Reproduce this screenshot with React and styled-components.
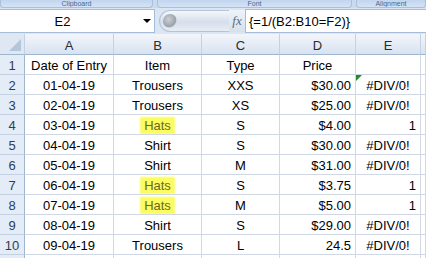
import React from 'react'
import styled, { createGlobalStyle } from 'styled-components'

const Global = createGlobalStyle`
html,body{margin:0;padding:0;background:#fff;}
body{font-family:"Liberation Sans",Arial,sans-serif;overflow:hidden;}
`

const Page = styled.div`
width:426px;
height:258px;
overflow:hidden;
background:#dbe6f4;
display:flex;
flex-direction:column;
`

const Ribbon = styled.div`
flex:0 0 8px;
display:flex;
gap:4px;
background:#c9d9ee;
overflow:hidden;
`

const Group = styled.div`
flex:0 0 ${({w})=>w}px;
height:8px;
background:linear-gradient(#c2d5ef,#d5e3f5);
border:1px solid #a9c0dc;
border-top:none;
border-radius:0 0 4px 4px;
box-sizing:border-box;
display:flex;
justify-content:center;
align-items:center;
font-size:7px;
line-height:7px;
color:#4a6790;
overflow:hidden;
`

const FormulaBar = styled.div`
flex:0 0 24px;
margin-top:1px;
display:flex;
align-items:stretch;
background:#dbe6f4;
`

const NameBox = styled.div`
flex:0 0 155px;
background:#fff;
border:1px solid #a7bcd8;
border-left:none;
box-sizing:border-box;
display:flex;
align-items:center;
font-size:13px;
color:#000;
& span{flex:1;text-align:center;padding-right:18px;}
`

const Arrow = styled.div`
width:0;height:0;
border-left:4px solid transparent;
border-right:4px solid transparent;
border-top:4px solid #000;
margin-right:3px;
`

const Pill = styled.div`
flex:0 0 70px;
margin:1px 0 1px 4px;
border-radius:11px 0 0 11px;
background:linear-gradient(#f4f7fb,#d5dfeb 55%,#e6edf5);
border:1px solid #b3c3d8;
border-right:none;
box-sizing:border-box;
display:flex;
align-items:center;
padding-left:3px;
`

const Knob = styled.div`
width:14px;height:14px;border-radius:50%;
background:radial-gradient(circle at 40% 40%,#c9ccd0,#8b9198 60%,#d7dde4 70%);
opacity:.8;
`

const Fx = styled.div`
flex:0 0 16px;
margin:1px 0;
display:flex;
align-items:center;
justify-content:center;
font-family:"Liberation Serif","Times New Roman",serif;
font-style:italic;
font-size:13px;
color:#5a6a80;
background:linear-gradient(#eef3f9,#d6e0ec);
`

const Input = styled.div`
flex:1;
background:#fff;
border:1px solid #a7bcd8;
border-right:none;
box-sizing:border-box;
display:flex;
align-items:center;
padding-left:3px;
font-size:13px;
color:#000;
white-space:nowrap;
`

const Sheet = styled.div`
margin-top:1px;
flex:0 0 auto;
display:grid;
grid-template-columns:25px 89px 88px 78px 76px 65px 1fr;
grid-template-rows:21px;
grid-auto-rows:20px;
background:#fff;
`

const ColHead = styled.div`
background:linear-gradient(#f3f6fb,#e3eaf5 60%,#d8e2f0);
border-right:1px solid #c3d1e3;
border-bottom:1px solid #9eb6ce;
box-sizing:border-box;
display:flex;
align-items:center;
justify-content:center;
padding-top:3px;
font-size:13px;
color:#2b2b2b;
`

const Corner = styled(ColHead)`
position:relative;
background:#dfe7f3;
&::after{
content:'';
position:absolute;
right:3px;bottom:3px;
width:0;height:0;
border-left:12px solid transparent;
border-bottom:12px solid #b5c6dc;
}
`

const RowHead = styled.div`
background:#e4ecf7;
border-right:1px solid #9eb6ce;
border-bottom:1px solid #c3d1e3;
box-sizing:border-box;
display:flex;
align-items:flex-end;
justify-content:center;
padding-bottom:1px;
font-size:13px;
line-height:15px;
color:#2f3c52;
`

const Cell = styled.div`
border-right:1px solid #d0d7e5;
border-bottom:1px solid #d0d7e5;
box-sizing:border-box;
display:flex;
align-items:flex-end;
justify-content:${({align})=>align==='right'?'flex-end':'center'};
padding:0 ${({align})=>align==='right'?'4px':'0'} 1px 0;
font-size:13px;
line-height:15px;
color:#000;
white-space:nowrap;
position:relative;
overflow:hidden;
`

const Flag = styled.div`
position:absolute;
left:0;top:0;
width:0;height:0;
border-top:6px solid #1f8a2e;
border-right:6px solid transparent;
`

const Hl = styled.span`
background:#fbfb62;
color:#6e6a12;
padding:0 3px;
line-height:15px;
box-shadow:0 0 2px 1px #fbfb62;
`

const rows = [
  ['Date of Entry','Item','Type','Price',''],
  ['01-04-19','Trousers','XXS','$30.00','#DIV/0!'],
  ['02-04-19','Trousers','XS','$25.00','#DIV/0!'],
  ['03-04-19','Hats','S','$4.00','1'],
  ['04-04-19','Shirt','S','$30.00','#DIV/0!'],
  ['05-04-19','Shirt','M','$31.00','#DIV/0!'],
  ['06-04-19','Hats','S','$3.75','1'],
  ['07-04-19','Hats','M','$5.00','1'],
  ['08-04-19','Shirt','S','$29.00','#DIV/0!'],
  ['09-04-19','Trousers','L','24.5','#DIV/0!'],
  ['','','','',''],
]

export default function App(){
  return (
    <Page>
      <Global/>
      <Ribbon>
        <Group w={153}>Clipboard</Group>
        <Group w={195}>Font</Group>
        <Group w={70}>Alignment</Group>
      </Ribbon>
      <FormulaBar>
        <NameBox><span>E2</span><Arrow/></NameBox>
        <Pill><Knob/></Pill>
        <Fx>fx</Fx>
        <Input>{'{=1/(B2:B10=F2)}'}</Input>
      </FormulaBar>
      <Sheet>
        <Corner/>
        {['A','B','C','D','E',''].map((c,i)=><ColHead key={i}>{c}</ColHead>)}
        {rows.map((r,ri)=>(
          <React.Fragment key={ri}>
            <RowHead>{ri<10?ri+1:''}</RowHead>
            <Cell>{r[0]}</Cell>
            <Cell>{r[1]==='Hats'?<Hl>Hats</Hl>:r[1]}</Cell>
            <Cell>{r[2]}</Cell>
            <Cell align={ri===0?'center':'right'}>{r[3]}</Cell>
            <Cell align={r[4]==='1'?'right':'center'}>
              {ri===1 && <Flag/>}
              {r[4]}
            </Cell>
            <Cell/>
          </React.Fragment>
        ))}
      </Sheet>
    </Page>
  )
}
